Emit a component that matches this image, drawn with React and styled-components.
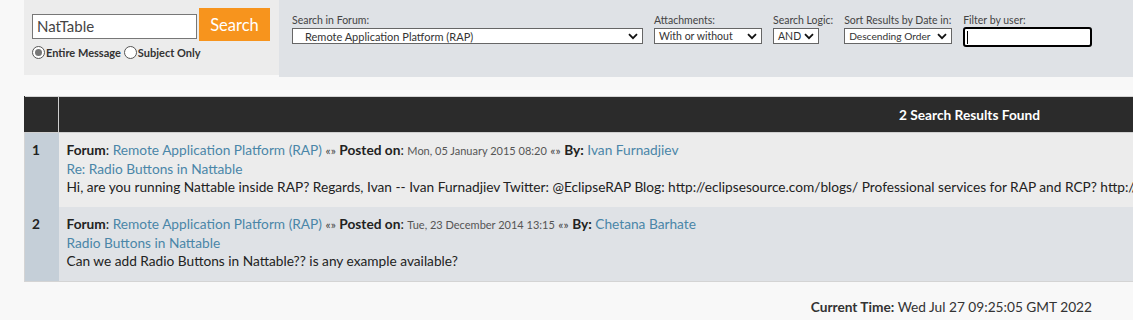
import React from "react";
import styled, { createGlobalStyle } from "styled-components";

const Global = createGlobalStyle`
  html, body { margin: 0; padding: 0; overflow: hidden; }
  body {
    background: #f8f8f8;
    font-family: Lato, "Liberation Sans", sans-serif;
    color: #222;
  }
`;

const Page = styled.div`
  padding-left: 24px;
  width: 1109px;
`;

const SearchBar = styled.div`
  display: flex;
  align-items: flex-start;
  width: 1109px;
`;

const QuickSearch = styled.form`
  width: 255px;
  height: 75px;
  box-sizing: border-box;
  background: #ececec;
  padding: 8px 0 0 8px;
  display: flex;
  flex-direction: column;
  margin: 0;
`;

const QuickRow = styled.div`
  display: flex;
  align-items: center;
  gap: 2px;
`;

const TextInput = styled.input`
  width: 165px;
  height: 25px;
  box-sizing: border-box;
  border: 1px solid #777;
  background: #fff;
  font-family: Lato, "Liberation Sans", sans-serif;
  font-size: 15px;
  color: #444;
  padding: 0 4px;
  margin: 3px 0 0 0;
  outline: none;
`;

const SearchButton = styled.button`
  width: 71px;
  height: 33px;
  border: none;
  background: #f7941d;
  color: #fff;
  font-family: Lato, "Liberation Sans", sans-serif;
  font-size: 16.5px;
  padding: 0;
  margin: 0;
`;

const RadioRow = styled.div`
  display: flex;
  align-items: center;
  margin-top: 5px;
  gap: 3px;
`;

const RadioLabel = styled.label`
  display: flex;
  align-items: center;
  font-size: 11px;
  font-weight: 700;
  color: #333;
`;

const RadioDot = styled.span`
  width: 11px;
  height: 11px;
  border-radius: 50%;
  border: 1px solid #555;
  background: #fff;
  display: flex;
  align-items: center;
  justify-content: center;
  margin-right: 1px;
  &::after {
    content: "";
    width: 7px;
    height: 7px;
    border-radius: 50%;
    background: ${(p) => (p.$checked ? "#777" : "transparent")};
  }
`;

const Advanced = styled.div`
  flex: 1;
  height: 77px;
  background: #dfe2e6;
  display: flex;
  align-items: flex-start;
  gap: 11px;
  padding: 14px 0 0 13px;
  box-sizing: border-box;
`;

const Field = styled.div`
  display: flex;
  flex-direction: column;
`;

const FieldLabel = styled.span`
  font-size: 10.5px;
  color: #444;
  line-height: 13px;
  white-space: nowrap;
`;

const SelectBox = styled.div`
  width: ${(p) => p.$w}px;
  height: 16px;
  box-sizing: border-box;
  border: 1px solid #666;
  background: #fff;
  display: flex;
  align-items: center;
  justify-content: space-between;
  padding: 0 4px 0 ${(p) => p.$pl || 4}px;
  font-size: ${(p) => p.$fs || 11}px;
  color: #333;
  margin-top: 1px;
  white-space: nowrap;
  overflow: hidden;
`;

const Chevron = () => (
  <svg width="10" height="7" viewBox="0 0 10 7" style={{ flexShrink: 0 }}>
    <path d="M1 1.2 L5 5.2 L9 1.2" fill="none" stroke="#111" strokeWidth="1.8" />
  </svg>
);

const FilterInput = styled.input`
  width: 129px;
  height: 20px;
  box-sizing: border-box;
  border: 2px solid #000;
  border-radius: 3px;
  background: #fff;
  margin: 0;
  padding: 0 2px;
  outline: none;
  font-size: 11px;
`;

const Caret = styled.span`
  position: relative;
  width: 0;
  height: 0;
  &::after {
    content: "";
    position: absolute;
    left: 4px;
    top: -16px;
    width: 1px;
    height: 13px;
    background: #000;
  }
`;

const Results = styled.table`
  margin-top: 19px;
  width: 1857px;
  border-collapse: collapse;
  border: 1px solid #d4d4d4;
  font-size: 13.7px;
`;

const HeadCell = styled.th`
  background: #2b2b2b;
  height: 35px;
  padding: 0;
  color: #fff;
  font-weight: 700;
  text-align: center;
  border-left: 1px solid ${(p) => (p.$first ? "#2b2b2b" : "#cfcfcf")};
  border-bottom: 1px solid #d0d0d0;
  width: ${(p) => (p.$first ? "33px" : "auto")};
`;

const NumCell = styled.td`
  width: 33px;
  box-sizing: border-box;
  background: #c5cfd8;
  vertical-align: top;
  font-weight: 700;
  padding: 8px 0 0 7px;
  line-height: 18px;
`;

const BodyCell = styled.td`
  background: ${(p) => (p.$alt ? "#dfe2e6" : "#ececec")};
  vertical-align: top;
  padding: 8px 8px 11px 8px;
  line-height: 18px;
  color: #222;
  white-space: nowrap;
`;

const Line = styled.div``;

const Link = styled.a`
  color: #4a86a8;
  text-decoration: none;
`;

const Small = styled.span`
  font-size: 11px;
  color: #555;
`;

const Sep = styled.span`
  font-size: 12px;
  color: #444;
`;

const Footer = styled.div`
  text-align: right;
  padding: 16px 41px 0 0;
  font-size: 13.7px;
  color: #333;
`;

const results = [
  {
    n: 1,
    date: "Mon, 05 January 2015 08:20",
    by: "Ivan Furnadjiev",
    title: "Re: Radio Buttons in Nattable",
    body:
      "Hi, are you running Nattable inside RAP? Regards, Ivan -- Ivan Furnadjiev Twitter: @EclipseRAP Blog: http://eclipsesource.com/blogs/ Professional services for RAP and RCP? http://eclipsesource.com/services/rap/",
  },
  {
    n: 2,
    date: "Tue, 23 December 2014 13:15",
    by: "Chetana Barhate",
    title: "Radio Buttons in Nattable",
    body: "Can we add Radio Buttons in Nattable?? is any example available?",
  },
];

export default function App() {
  return (
    <Page>
      <Global />
      <SearchBar>
        <QuickSearch onSubmit={(e) => e.preventDefault()}>
          <QuickRow>
            <TextInput defaultValue="NatTable" />
            <SearchButton type="button">Search</SearchButton>
          </QuickRow>
          <RadioRow>
            <RadioLabel>
              <RadioDot $checked />
              Entire Message
            </RadioLabel>
            <RadioLabel>
              <RadioDot />
              Subject Only
            </RadioLabel>
          </RadioRow>
        </QuickSearch>
        <Advanced>
          <Field>
            <FieldLabel>Search in Forum:</FieldLabel>
            <SelectBox $w={351} $pl={12}>
              Remote Application Platform (RAP)
              <Chevron />
            </SelectBox>
          </Field>
          <Field>
            <FieldLabel>Attachments:</FieldLabel>
            <SelectBox $w={108} $fs={10.5}>
              With or without
              <Chevron />
            </SelectBox>
          </Field>
          <Field>
            <FieldLabel>Search Logic:</FieldLabel>
            <SelectBox $w={46} $fs={10.5}>
              AND
              <Chevron />
            </SelectBox>
          </Field>
          <Field>
            <FieldLabel>Sort Results by Date in:</FieldLabel>
            <SelectBox $w={108} $fs={10.2}>
              Descending Order
              <Chevron />
            </SelectBox>
          </Field>
          <Field>
            <FieldLabel>Filter by user:</FieldLabel>
            <FilterInput />
            <Caret />
          </Field>
        </Advanced>
      </SearchBar>

      <Results>
        <thead>
          <tr>
            <HeadCell $first />
            <HeadCell>2 Search Results Found</HeadCell>
          </tr>
        </thead>
        <tbody>
          {results.map((r, i) => (
            <tr key={r.n}>
              <NumCell>{r.n}</NumCell>
              <BodyCell $alt={i % 2 === 1}>
                <Line>
                  <b>Forum</b>: <Link href="#">Remote Application Platform (RAP)</Link>{" "}
                  <Sep>«»</Sep> <b>Posted on</b>: <Small>{r.date}</Small>{" "}
                  <Sep>«»</Sep> <b>By:</b> <Link href="#">{r.by}</Link>
                </Line>
                <Line>
                  <Link href="#">{r.title}</Link>
                </Line>
                <Line>{r.body}</Line>
              </BodyCell>
            </tr>
          ))}
        </tbody>
      </Results>

      <Footer>
        <b>Current Time:</b> Wed Jul 27 09:25:05 GMT 2022
      </Footer>
    </Page>
  );
}
